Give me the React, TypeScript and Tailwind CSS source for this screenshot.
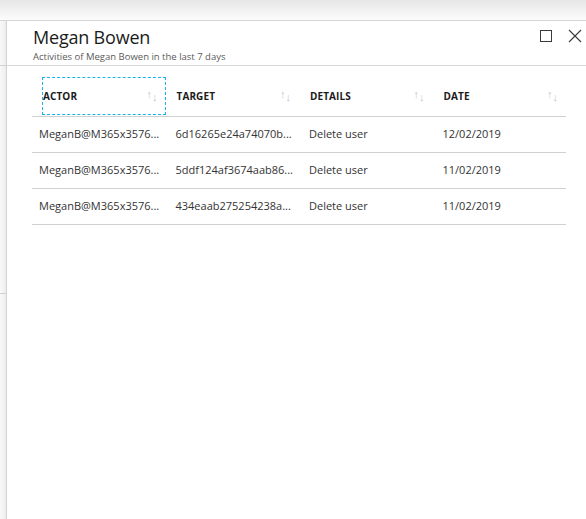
import React from "react";

const rows = [
  { actor: "MeganB@M365x3576...", target: "6d16265e24a74070b...", details: "Delete user", date: "12/02/2019" },
  { actor: "MeganB@M365x3576...", target: "5ddf124af3674aab86...", details: "Delete user", date: "11/02/2019" },
  { actor: "MeganB@M365x3576...", target: "434eaab275254238a...", details: "Delete user", date: "11/02/2019" },
];

function SortIcon() {
  return (
    <span className="flex items-start text-[11px] leading-none text-[#c4c4c4]">
      <span className="-mt-[2px]">↑</span>
      <span className="mt-[1px]">↓</span>
    </span>
  );
}

function HeaderCell({ label, focused }: { label: string; focused?: boolean }) {
  return (
    <div className="flex h-full items-start">
      <div
        className={
          "mt-[11px] ml-[10px] flex h-[38px] w-[124px] items-center justify-between pr-[8px] " +
          (focused ? "outline-1 outline-dashed outline-[#18b4e8] -outline-offset-1" : "")
        }
      >
        <span className="pl-[1px] text-[10px] font-bold tracking-[0.1px] text-[#1b1b1b]">{label}</span>
        <SortIcon />
      </div>
    </div>
  );
}

export default function App() {
  return (
    <div
      className="relative h-[519px] w-[586px] overflow-hidden bg-white"
      style={{ fontFamily: '"Open Sans", "Noto Sans", sans-serif' }}
    >
      <div className="h-[21px] border-b border-[#d6d6d6] bg-gradient-to-b from-[#e6e6e6] to-[#fcfcfc]" />
      <div className="flex h-[498px]">
        <div className="flex w-[7px] flex-col border-r border-[#d2d2d2] bg-gradient-to-r from-[#f9f9f9] to-[#ededed]">
          <div className="h-[45px] border-b border-[#d2d2d2]" />
          <div className="h-[228px] border-b border-[#d2d2d2]" />
        </div>
        <div className="flex flex-1 flex-col">
          <div className="flex h-[45px] items-start justify-between border-b border-[#d8d8d8]">
            <div className="pl-[26px] pt-[4px]">
              <div className="text-[18px] leading-[24px] tracking-[-0.2px] text-[#1b1b1b]">Megan Bowen</div>
              <div className="mt-[1px] text-[9.5px] leading-[13px] text-[#5a5a5a]">
                Activities of Megan Bowen in the last 7 days
              </div>
            </div>
            <div className="flex items-center gap-[16px] pr-[4px] pt-[8px]">
              <div className="h-[12px] w-[12px] border border-[#3a3a3a]" />
              <svg width="14" height="14" viewBox="0 0 14 14" className="text-[#3a3a3a]">
                <path d="M1 1 L13 13 M13 1 L1 13" stroke="currentColor" strokeWidth="1.1" fill="none" />
              </svg>
            </div>
          </div>
          <div className="ml-[25px] w-[534px]">
            <div className="grid h-[51px] grid-cols-4 border-b border-[#d0d0d0]">
              <HeaderCell label="ACTOR" focused />
              <HeaderCell label="TARGET" />
              <HeaderCell label="DETAILS" />
              <HeaderCell label="DATE" />
            </div>
            {rows.map((r, i) => (
              <div
                key={i}
                className="grid h-[36px] grid-cols-4 items-center border-b border-[#d0d0d0] text-[11px] text-[#333333]"
              >
                <div className="whitespace-nowrap pl-[7px]">{r.actor}</div>
                <div className="whitespace-nowrap pl-[10px]">{r.target}</div>
                <div className="whitespace-nowrap pl-[10px]">{r.details}</div>
                <div className="whitespace-nowrap pl-[10px]">{r.date}</div>
              </div>
            ))}
          </div>
        </div>
      </div>
    </div>
  );
}
